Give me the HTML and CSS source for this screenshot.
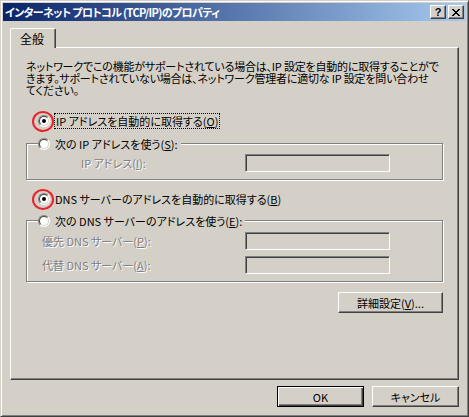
FILE: index.html
```html
<!DOCTYPE html>
<html lang="ja">

<head>
  <meta charset="UTF-8">
  <meta name="viewport" content="width=device-width,initial-scale=1.0">
  <title>インターネット プロトコル (TCP/IP)のプロパティ</title>
  <link rel="stylesheet" href="styles.css">
</head>

<body>
  <div class="window">
    <div class="titlebar">
      <span class="title">インターネット プロトコル (TCP/IP)のプロパティ</span>
      <div class="caption-buttons">
        <span class="cap-btn help">?</span>
        <span class="cap-btn close">
          <svg width="8" height="7" viewBox="0 0 8 7">
            <path d="M0 0h2v1H0zM6 0h2v1H6zM1 1h2v1H1zM5 1h2v1H5zM2 2h4v1H2zM3 3h2v1H3zM2 4h4v1H2zM1 5h2v1H1zM5 5h2v1H5zM0 6h2v1H0zM6 6h2v1H6z" fill="#000"/>
          </svg>
        </span>
      </div>
    </div>

    <div class="dialog">
      <div class="tabs">
        <div class="tab">全般</div>
      </div>

      <div class="panel">
        <p class="intro">ネットワークでこの機能がサポートされている場合は、IP 設定を自動的に取得することがで<br>きます。サポートされていない場合は、ネットワーク管理者に適切な IP 設定を問い合わせ<br>てください。</p>

        <div class="option auto-ip">
          <span class="radio checked"><span class="ring"></span></span>
          <span class="focus">IP アドレスを自動的に取得する(<u>O</u>)</span>
        </div>

        <fieldset class="group group-ip">
          <legend class="option">
            <span class="radio"></span>
            <span>次の IP アドレスを使う(<u>S</u>):</span>
          </legend>
          <div class="field">
            <span class="label disabled">IP アドレス(<u>I</u>):</span>
            <span class="edit"></span>
          </div>
        </fieldset>

        <div class="option auto-dns">
          <span class="radio checked"><span class="ring"></span></span>
          <span>DNS サーバーのアドレスを自動的に取得する(<u>B</u>)</span>
        </div>

        <fieldset class="group group-dns">
          <legend class="option">
            <span class="radio"></span>
            <span>次の DNS サーバーのアドレスを使う(<u>E</u>):</span>
          </legend>
          <div class="field">
            <span class="label disabled">優先 DNS サーバー(<u>P</u>):</span>
            <span class="edit"></span>
          </div>
          <div class="field">
            <span class="label disabled">代替 DNS サーバー(<u>A</u>):</span>
            <span class="edit"></span>
          </div>
        </fieldset>

        <div class="advanced-row">
          <button class="btn advanced">詳細設定(<u>V</u>)...</button>
        </div>
      </div>

      <div class="footer">
        <button class="btn default">OK</button>
        <button class="btn">キャンセル</button>
      </div>
    </div>
  </div>
</body>

</html>
```

FILE: styles.css
```css
body{
  margin: 0;
  background: #d4d0c8;
  font: 11px "Noto Sans CJK JP", "Liberation Sans", sans-serif;
  font-feature-settings: "palt";
  color: #000;
}
.window{
  width: 469px;
  height: 417px;
  box-sizing: border-box;
  border: 1px solid;
  border-color: #d4d0c8 #404040 #404040 #d4d0c8;
  box-shadow: inset 1px 1px 0 #fff, inset -1px -1px 0 #808080;
  padding: 2px;
  display: flex;
  flex-direction: column;
  background: #d4d0c8;
}

/* title bar */
.titlebar{
  height: 18px;
  display: flex;
  align-items: center;
  justify-content: space-between;
  padding: 0 2px 0 2px;
  background: linear-gradient(to right, #0a246a, #a6caf0);
}
.title{
  color: #fff;
  font-weight: bold;
  font-size: 11px;
  letter-spacing: -0.65px;
  line-height: 18px;
  white-space: nowrap;
}
.caption-buttons{
  display: flex;
  gap: 2px;
}
.cap-btn{
  width: 16px;
  height: 14px;
  box-sizing: border-box;
  display: flex;
  align-items: center;
  justify-content: center;
  background: #d4d0c8;
  border: 1px solid;
  border-color: #fff #404040 #404040 #fff;
  box-shadow: inset -1px -1px 0 #808080;
}
.cap-btn.help{
  font: bold 11px "Liberation Sans", sans-serif;
  line-height: 12px;
}

/* tabs + panel */
.dialog{
  flex: 1;
  display: flex;
  flex-direction: column;
  padding: 7px 7px 0;
}
.tabs{
  display: flex;
  position: relative;
  z-index: 1;
  margin-bottom: -1px;
}
.tab{
  width: 46px;
  height: 20px;
  box-sizing: border-box;
  padding: 3px 0 0 9px;
  font-size: 12px;
  line-height: 14px;
  background: #d4d0c8;
  border-left: 1px solid #fff;
  border-top: 1px solid #fff;
  border-right: 1px solid #404040;
  border-radius: 2px 2px 0 0;
  box-shadow: inset -1px 0 0 #808080;
}
.panel{
  height: 333px;
  box-sizing: border-box;
  border: 1px solid;
  border-color: #fff #404040 #404040 #fff;
  box-shadow: inset -1px -1px 0 #808080;
  padding: 12px 15px 0;
  display: flex;
  flex-direction: column;
}
.intro{
  margin: 0;
  line-height: 12px;
  letter-spacing: -0.2px;
  white-space: nowrap;
}

/* radio options */
.option{
  display: flex;
  align-items: center;
  gap: 5px;
  height: 16px;
  line-height: 14px;
  white-space: nowrap;
}
.auto-ip{
  margin: 17px 0 0 12px;
}
.auto-dns{
  margin: 11px 0 0 12px;
}
.radio{
  position: relative;
  flex: none;
  width: 12px;
  height: 12px;
  box-sizing: border-box;
  border-radius: 50%;
  border: 1px solid;
  border-color: #808080 #fff #fff #808080;
  background: #fff;
}
.radio::before{
  content: "";
  position: absolute;
  inset: 0;
  border-radius: 50%;
  border: 1px solid;
  border-color: #404040 #d4d0c8 #d4d0c8 #404040;
}
.radio.checked::after{
  content: "";
  position: absolute;
  left: 3px;
  top: 3px;
  width: 4px;
  height: 4px;
  border-radius: 50%;
  background: #000;
}
/* red annotation circle round the chosen options */
.ring{
  position: absolute;
  left: -7px;
  top: -5px;
  width: 22px;
  height: 21px;
  box-sizing: border-box;
  border: 2px solid #e8232e;
  border-radius: 50%;
}
.focus{
  outline: 1px dotted #000;
  padding: 0 1px;
}

/* group boxes */
.group{
  margin: 7px 0 0;
  border: 1px solid #808080;
  box-shadow: 1px 1px 0 #fff, inset 1px 1px 0 #fff;
  padding: 3px 11px 7px;
}
.group-dns{
  margin-top: 6px;
  padding-top: 4px;
}
.group legend{
  padding: 0 3px 0 0;
  height: 15px;
  background: #d4d0c8;
}
.field{
  display: flex;
  align-items: center;
  height: 18px;
}
.group-ip .field{
  padding-left: 43px;
}
.group-dns .field{
  padding-left: 4px;
}
.group-dns .field + .field{
  margin-top: 6px;
}
.label{
  flex: 1;
  white-space: nowrap;
}
.disabled{
  color: #808080;
  text-shadow: 1px 1px 0 #fff;
}
.edit{
  width: 145px;
  height: 18px;
  margin-right: 41px;
  box-sizing: border-box;
  border: 1px solid;
  border-color: #808080 #fff #fff #808080;
  box-shadow: inset 1px 1px 0 #404040, inset -1px -1px 0 #d4d0c8;
  background: #d4d0c8;
}

/* buttons */
.btn{
  width: 87px;
  height: 21px;
  box-sizing: border-box;
  padding: 0;
  font: inherit;
  line-height: 14px;
  color: #000;
  background: #d4d0c8;
  border: 1px solid;
  border-color: #fff #404040 #404040 #fff;
  box-shadow: inset -1px -1px 0 #808080;
}
.btn.default{
  border-color: #000;
  box-shadow: inset 1px 1px 0 #fff, inset -1px -1px 0 #404040, inset -2px -2px 0 #808080;
}
.advanced-row{
  display: flex;
  justify-content: flex-end;
  margin-top: 10px;
}
.btn.advanced{
  width: 105px;
}
.footer{
  display: flex;
  justify-content: flex-end;
  gap: 8px;
  margin-top: 6px;
}
```
